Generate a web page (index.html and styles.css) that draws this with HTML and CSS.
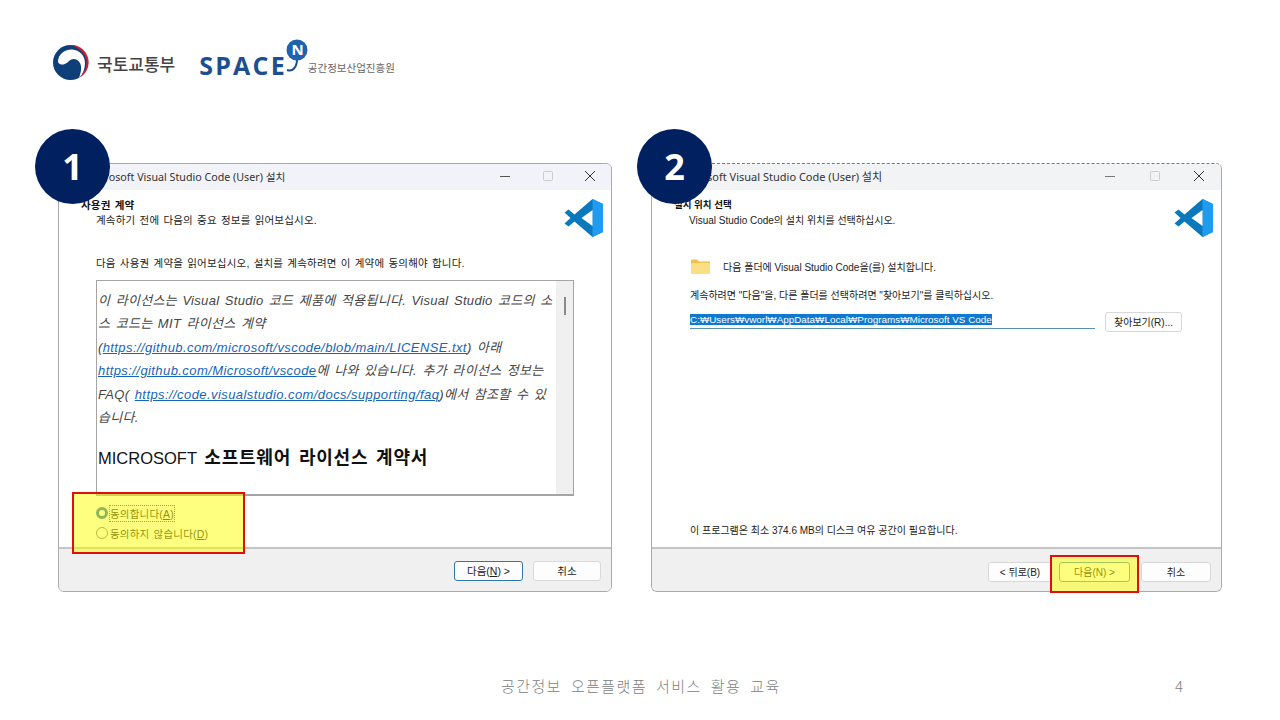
FILE: index.html
```html
<!DOCTYPE html>
<html lang="ko">
<head>
    <meta charset="utf-8">
    <title>공간정보 오픈플랫폼 서비스 활용 교육</title>
    <link rel="stylesheet" href="styles.css">
</head>
<body>
    <div class="slide">
        <header class="logos">
            <svg class="taegeuk" width="38" height="36" viewBox="0 0 38 36">
                <circle cx="18.500" cy="17.500" r="17.500" fill="#0f3f78"/>
                <path d="M17 0A17.500 17.500 0 0 1 27 33C33 27 37 19 33 11C30 5 24 1 17 0Z" fill="#d3202f"/>
                <path d="M6 17C6 9 13 4 20 4.500C28 5 33 11 33 18C33 24 31 29 27 33C29 28 30 22 28 18C25 13 20 13 17 16C14 19 11 20 9 19.500C7.500 19 6.500 18 6 17Z" fill="#fff"/>
            </svg>
            <span class="ministry">국토교통부</span>
            <div class="space-logo">
                <span class="space-word">SPACE</span>
                <svg class="space-n" width="28" height="34" viewBox="0 0 28 34">
                    <path d="M7 31C13 33 17 28 17 20" fill="none" stroke="#1d4f8e" stroke-width="2"/>
                    <circle cx="17" cy="11" r="10.500" fill="#1f63ad"/>
                    <text x="11.500" y="16" class="space-n-text">N</text>
                </svg>
                <span class="space-org">공간정보산업진흥원</span>
            </div>
        </header>

        <section class="window window-one">
            <div class="titlebar">
                <span class="title">Microsoft Visual Studio Code (User) 설치</span>
                <div class="window-btns">
                    <svg width="12" height="12" viewBox="0 0 12 12"><path d="M1 6.500H11" stroke="#555" stroke-width="1"/></svg>
                    <svg width="12" height="12" viewBox="0 0 12 12"><rect x="1.500" y="1.500" width="9" height="9" rx="1" fill="none" stroke="#ccc"/></svg>
                    <svg width="12" height="12" viewBox="0 0 12 12"><path d="M1 1L11 11M11 1L1 11" stroke="#333" stroke-width="1"/></svg>
                </div>
            </div>
            <div class="content">
                <div class="section-head">
                    <div class="head-text">
                        <h4>사용권 계약</h4>
                        <p>계속하기 전에 다음의 중요 정보를 읽어보십시오.</p>
                    </div>
                    <svg class="vscode" width="40" height="40" viewBox="0 0 40 40">
                        <path d="M28.500 1L39 6V34L28.500 39L10.500 23.500L4.500 28.500L.5 25.500L6.500 20L.5 14.500L4.500 11.500L10.500 16.500Z" fill="#0a78bd"/>
                        <path d="M28.500 1L39 6V34L28.500 39Z" fill="#1f9cf0"/>
                        <path d="M28.500 12L17.500 20L28.500 28Z" fill="#fff"/>
                    </svg>
                </div>
                <p class="intro">다음 사용권 계약을 읽어보십시오, 설치를 계속하려면 이 계약에 동의해야 합니다.</p>
                <div class="license">
                    <div class="license-text">
                        <p class="license-note">이 라이선스는 Visual Studio 코드 제품에 적용됩니다. Visual Studio 코드의 소<br>스 코드는 MIT 라이선스 계약<br>(<a>https://github.com/microsoft/vscode/blob/main/LICENSE.txt</a>) 아래<br><a>https://github.com/Microsoft/vscode</a>에 나와 있습니다. 추가 라이선스 정보는<br>FAQ( <a>https://code.visualstudio.com/docs/supporting/faq</a>)에서 참조할 수 있<br>습니다.</p>
                        <p class="license-title">MICROSOFT <b>소프트웨어 라이선스 계약서</b></p>
                    </div>
                    <div class="scrollbar"><span class="thumb"></span></div>
                </div>
                <div class="radios">
                    <div class="radio-row"><span class="radio checked"></span><span class="focused">동의합니다(<u>A</u>)</span></div>
                    <div class="radio-row"><span class="radio"></span><span>동의하지 않습니다(<u>D</u>)</span></div>
                </div>
            </div>
            <div class="footer">
                <button class="btn btn-default">다음(<u>N</u>) &gt;</button>
                <button class="btn">취소</button>
            </div>
        </section>

        <section class="window window-two">
            <div class="titlebar">
                <span class="title">Microsoft Visual Studio Code (User) 설치</span>
                <div class="window-btns">
                    <svg width="12" height="12" viewBox="0 0 12 12"><path d="M1 6.500H11" stroke="#777" stroke-width="1"/></svg>
                    <svg width="12" height="12" viewBox="0 0 12 12"><rect x="1.500" y="1.500" width="9" height="9" rx="1" fill="none" stroke="#ccc"/></svg>
                    <svg width="12" height="12" viewBox="0 0 12 12"><path d="M1 1L11 11M11 1L1 11" stroke="#333" stroke-width="1"/></svg>
                </div>
            </div>
            <div class="content">
                <div class="section-head">
                    <div class="head-text">
                        <h4>설치 위치 선택</h4>
                        <p>Visual Studio Code의 설치 위치를 선택하십시오.</p>
                    </div>
                    <svg class="vscode" width="40" height="40" viewBox="0 0 40 40">
                        <path d="M28.500 1L39 6V34L28.500 39L10.500 23.500L4.500 28.500L.5 25.500L6.500 20L.5 14.500L4.500 11.500L10.500 16.500Z" fill="#0a78bd"/>
                        <path d="M28.500 1L39 6V34L28.500 39Z" fill="#1f9cf0"/>
                        <path d="M28.500 12L17.500 20L28.500 28Z" fill="#fff"/>
                    </svg>
                </div>
                <div class="folder-row">
                    <svg width="19" height="15" viewBox="0 0 19 15">
                        <path d="M0 2C0 1 .5 .5 1.500 .5H6L8 2.500H19V14C19 14.500 18.500 15 18 15H1C.5 15 0 14.500 0 14Z" fill="#f0c04f"/>
                        <path d="M0 4H19V14C19 14.500 18.500 15 18 15H1C.5 15 0 14.500 0 14Z" fill="#fbdf85"/>
                    </svg>
                    <span>다음 폴더에 Visual Studio Code을(를) 설치합니다.</span>
                </div>
                <p class="hint">계속하려면 "다음"을, 다른 폴더를 선택하려면 "찾아보기"를 클릭하십시오.</p>
                <div class="path-row">
                    <div class="path-input"><span class="selected">C:₩Users₩vworl₩AppData₩Local₩Programs₩Microsoft VS Code</span></div>
                    <button class="btn btn-browse">찾아보기(R)...</button>
                </div>
                <p class="disk">이 프로그램은 최소 374.6 MB의 디스크 여유 공간이 필요합니다.</p>
            </div>
            <div class="footer">
                <button class="btn btn-back">&lt; 뒤로(B)</button>
                <button class="btn btn-next">다음(N) &gt;</button>
                <button class="btn btn-cancel">취소</button>
            </div>
        </section>

        <div class="badge badge-one">1</div>
        <div class="badge badge-two">2</div>
        <div class="mark mark-one"></div>
        <div class="mark mark-two"></div>

        <footer class="slide-footer">
            <span class="course">공간정보 오픈플랫폼 서비스 활용 교육</span>
            <span class="page-num">4</span>
        </footer>
    </div>
</body>
</html>
```

FILE: styles.css
```css
* {
    box-sizing: border-box;
}
body {
    margin: 0;
    background: #fff;
    font-family: "Liberation Sans", "Noto Sans CJK KR", sans-serif;
    color: #333;
}
p, h4 {
    margin: 0;
}
.slide {
    position: relative;
    width: 1280px;
    height: 720px;
    overflow: hidden;
    background: #fff;
}

/* logos */
.logos {
    display: flex;
    align-items: center;
    padding: 42px 0 0 52px;
    height: 84px;
}
.ministry {
    margin-left: 7px;
    font-family: "Noto Sans CJK KR", sans-serif;
    font-size: 17px;
    font-weight: 500;
    color: #444;
}
.space-logo {
    display: flex;
    align-items: flex-start;
    height: 42px;
    margin-left: 24px;
}
.space-word {
    margin-top: 8px;
    font-family: "Open Sans", sans-serif;
    font-size: 25px;
    line-height: 30px;
    font-weight: 700;
    letter-spacing: 2.200px;
    color: #1d4f8e;
}
.space-n {
    margin: -3px 0 0 -7px;
}
.space-n-text {
    font-family: "Open Sans", sans-serif;
    font-size: 15px;
    font-weight: 700;
    fill: #fff;
}
.space-org {
    margin-top: 19px;
    font-family: "Noto Sans CJK KR", sans-serif;
    font-size: 10.500px;
    line-height: 14px;
    color: #666;
}

/* installer windows */
.window {
    position: absolute;
    top: 163px;
    height: 429px;
    display: flex;
    flex-direction: column;
    background: #fff;
    border: 1px solid #aaa;
    border-radius: 6px;
    overflow: hidden;
    font-family: "Liberation Sans", "Noto Sans CJK KR", sans-serif;
}
.window-one {
    left: 58px;
    width: 554px;
}
.window-two {
    left: 651px;
    width: 571px;
    border-top: 1px dashed #777;
}
.titlebar {
    display: flex;
    align-items: center;
    justify-content: space-between;
    height: 26px;
    flex: none;
    padding: 0 15px 2px 28px;
    background: #f1f3f9;
    font-family: "Noto Sans", "Noto Sans CJK KR", sans-serif;
    font-size: 10.700px;
    color: #333;
}
.window-two .titlebar {
    padding: 0 16px 2px 26px;
    background: #f2f3f5;
    font-size: 11px;
}
.window-btns {
    display: flex;
    gap: 30.500px;
    align-items: center;
}
.window-two .window-btns {
    gap: 32.500px;
}
.content {
    flex: 1;
    min-height: 0;
    display: flex;
    flex-direction: column;
    font-size: 10.500px;
    letter-spacing: 0.200px;
    word-spacing: 1px;
    color: #222;
    padding: 8px 7px 0 22px;
}
.window-two .content {
    font-size: 10px;
    letter-spacing: 0;
    word-spacing: 0;
}
.section-head {
    display: flex;
    justify-content: space-between;
    height: 44px;
}
.head-text h4 {
    font-size: 10.500px;
    line-height: 14px;
    font-weight: 700;
    color: #111;
}
.window-two .head-text h4 {
    font-size: 9.500px;
}
.head-text p {
    margin: 1px 0 0 15px;
    line-height: 15px;
}
.intro {
    margin: 13px 0 0 15px;
    line-height: 16px;
}

/* license box */
.license {
    display: flex;
    width: 478px;
    height: 216px;
    margin: 9px 0 0 15px;
    border: 1px solid #a5a5a5;
    border-bottom-width: 2px;
}
.license-text {
    flex: 1;
    padding: 8px 0 0 1px;
    overflow: hidden;
}
.license-note {
    font-size: 13px;
    line-height: 23.400px;
    font-style: italic;
    letter-spacing: 0.300px;
    word-spacing: 1.500px;
    color: #444;
    white-space: nowrap;
}
.license-note a {
    color: #1565b8;
    text-decoration: underline;
    letter-spacing: 0.420px;
    word-spacing: 0;
}
.license-title {
    margin-top: 17px;
    font-size: 16.500px;
    line-height: 24px;
    letter-spacing: 0;
    word-spacing: 0;
    color: #111;
}
.license-title b {
    margin-left: 3px;
    font-size: 18px;
    letter-spacing: 0.800px;
    word-spacing: 2px;
    font-weight: 700;
}
.scrollbar {
    width: 17px;
    background: #f0f0f0;
    display: flex;
    justify-content: center;
    padding-top: 16px;
}
.thumb {
    width: 2px;
    height: 18px;
    background: #8a8a8a;
}
.radios {
    margin: 7px 0 0 15px;
}
.radio-row {
    display: flex;
    align-items: center;
    gap: 2px;
    height: 20px;
}
.radio {
    width: 12px;
    height: 12px;
    border-radius: 50%;
    border: 1px solid #777;
    background: #fff;
}
.radio.checked {
    border: 3.500px solid #1f6fb0;
}
.focused {
    outline: 1px dotted #555;
}

/* bottom button bar */
.footer {
    flex: none;
    height: 44px;
    display: flex;
    justify-content: flex-end;
    gap: 10px;
    padding: 12px 10px 0 0;
    background: #f0f0f0;
    border-top: 2px solid #c4c4c4;
}
.btn {
    width: 68px;
    height: 20px;
    padding: 0;
    background: #fdfdfd;
    border: 1px solid #d8d8d8;
    border-radius: 3px;
    font-family: "Liberation Sans", "Noto Sans CJK KR", sans-serif;
    font-size: 10.500px;
    line-height: 17px;
    color: #222;
}
.btn-default {
    width: 69px;
    border: 1.500px solid #2f78ad;
}

/* second window */
.folder-row {
    display: flex;
    align-items: center;
    gap: 13px;
    margin: 16px 0 0 17px;
    height: 16px;
}
.hint {
    margin: 14px 0 0 16px;
    line-height: 15px;
}
.path-row {
    display: flex;
    align-items: flex-start;
    gap: 10px;
    margin: 9px 0 0 16px;
}
.path-input {
    width: 405px;
    height: 17px;
    border-bottom: 1px solid #5b8fb5;
    line-height: 16px;
    font-size: 9.900px;
}
.selected {
    background: #0f78d0;
    color: #fff;
}
.btn-browse {
    width: 77px;
    font-size: 10px;
}
.disk {
    margin: 191px 0 0 16px;
    line-height: 15px;
}
.window-two .footer {
    gap: 0;
    padding: 13px 10px 0 0;
}
.window-two .footer .btn {
    font-size: 10px;
}
.btn-back {
    width: 64px;
}
.btn-next {
    width: 71px;
    margin: 0 11px 0 7px;
    border: 1px solid #4a90b8;
}
.btn-cancel {
    width: 70px;
}

/* slide overlays */
.badge {
    position: absolute;
    top: 129px;
    width: 75px;
    height: 75px;
    border-radius: 50%;
    background: #002060;
    color: #fff;
    font-family: "Noto Sans", sans-serif;
    font-size: 36px;
    font-weight: 700;
    line-height: 75px;
    text-align: center;
}
.badge-one {
    left: 35px;
}
.badge-two {
    left: 637px;
}
.mark {
    position: absolute;
    background: rgba(255, 255, 0, 0.5);
    border: 2px solid #de0f0f;
}
.mark-one {
    left: 72px;
    top: 492px;
    width: 173px;
    height: 62px;
}
.mark-two {
    left: 1050px;
    top: 555px;
    width: 89px;
    height: 38px;
}

/* slide footer */
.slide-footer {
    position: absolute;
    left: 0;
    right: 0;
    top: 676px;
    display: flex;
    justify-content: flex-end;
    padding-right: 97px;
    font-family: "Noto Sans CJK KR", sans-serif;
    font-weight: 300;
    font-size: 15px;
    line-height: 20px;
    color: #808080;
}
.course {
    position: absolute;
    left: 501px;
    letter-spacing: 1.400px;
    word-spacing: 3.500px;
}
```
